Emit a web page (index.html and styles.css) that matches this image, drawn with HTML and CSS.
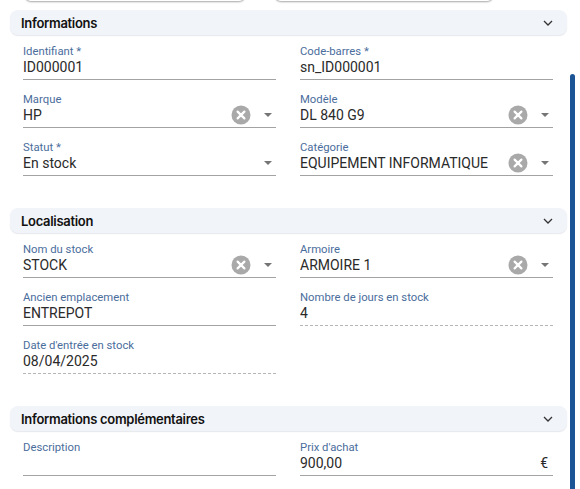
FILE: index.html
```html
<!DOCTYPE html>
<html lang="fr">
<head>
    <meta charset="UTF-8">
    <meta name="viewport" content="width=device-width, initial-scale=1.0">
    <title>Fiche équipement</title>
    <link rel="stylesheet" href="styles.css">
</head>
<body>
    <div class="top-actions">
        <div class="ghost-btn left"></div>
        <div class="ghost-btn right"></div>
    </div>

    <!-- Informations -->
    <section class="panel">
        <div class="panel-header">
            <h2>Informations</h2>
            <svg class="chevron" viewBox="0 0 10 6"><path d="M1 1 L5 5 L9 1"/></svg>
        </div>
        <div class="panel-body">
            <div class="field">
                <label>Identifiant *</label>
                <div class="control"><span class="value">ID000001</span></div>
            </div>
            <div class="field">
                <label>Code-barres *</label>
                <div class="control"><span class="value">sn_ID000001</span></div>
            </div>
            <div class="field">
                <label>Marque</label>
                <div class="control">
                    <span class="value">HP</span>
                    <svg class="clear" viewBox="0 0 20 20"><circle cx="10" cy="10" r="9.5"/><path d="M6.6 6.6 L13.4 13.4 M13.4 6.6 L6.6 13.4"/></svg>
                    <svg class="caret" viewBox="0 0 16 8"><path d="M4 2 L12 2 L8 6 Z"/></svg>
                </div>
            </div>
            <div class="field">
                <label>Modèle</label>
                <div class="control">
                    <span class="value">DL 840 G9</span>
                    <svg class="clear" viewBox="0 0 20 20"><circle cx="10" cy="10" r="9.5"/><path d="M6.6 6.6 L13.4 13.4 M13.4 6.6 L6.6 13.4"/></svg>
                    <svg class="caret" viewBox="0 0 16 8"><path d="M4 2 L12 2 L8 6 Z"/></svg>
                </div>
            </div>
            <div class="field">
                <label>Statut *</label>
                <div class="control">
                    <span class="value">En stock</span>
                    <svg class="caret" viewBox="0 0 16 8"><path d="M4 2 L12 2 L8 6 Z"/></svg>
                </div>
            </div>
            <div class="field">
                <label>Catégorie</label>
                <div class="control">
                    <span class="value">EQUIPEMENT INFORMATIQUE</span>
                    <svg class="clear" viewBox="0 0 20 20"><circle cx="10" cy="10" r="9.5"/><path d="M6.6 6.6 L13.4 13.4 M13.4 6.6 L6.6 13.4"/></svg>
                    <svg class="caret" viewBox="0 0 16 8"><path d="M4 2 L12 2 L8 6 Z"/></svg>
                </div>
            </div>
        </div>
    </section>

    <!-- Localisation -->
    <section class="panel">
        <div class="panel-header">
            <h2>Localisation</h2>
            <svg class="chevron" viewBox="0 0 10 6"><path d="M1 1 L5 5 L9 1"/></svg>
        </div>
        <div class="panel-body">
            <div class="field">
                <label>Nom du stock</label>
                <div class="control">
                    <span class="value">STOCK</span>
                    <svg class="clear" viewBox="0 0 20 20"><circle cx="10" cy="10" r="9.5"/><path d="M6.6 6.6 L13.4 13.4 M13.4 6.6 L6.6 13.4"/></svg>
                    <svg class="caret" viewBox="0 0 16 8"><path d="M4 2 L12 2 L8 6 Z"/></svg>
                </div>
            </div>
            <div class="field">
                <label>Armoire</label>
                <div class="control">
                    <span class="value">ARMOIRE 1</span>
                    <svg class="clear" viewBox="0 0 20 20"><circle cx="10" cy="10" r="9.5"/><path d="M6.6 6.6 L13.4 13.4 M13.4 6.6 L6.6 13.4"/></svg>
                    <svg class="caret" viewBox="0 0 16 8"><path d="M4 2 L12 2 L8 6 Z"/></svg>
                </div>
            </div>
            <div class="field">
                <label>Ancien emplacement</label>
                <div class="control"><span class="value">ENTREPOT</span></div>
            </div>
            <div class="field readonly">
                <label>Nombre de jours en stock</label>
                <div class="control"><span class="value">4</span></div>
            </div>
            <div class="field readonly">
                <label>Date d'entrée en stock</label>
                <div class="control"><span class="value">08/04/2025</span></div>
            </div>
        </div>
    </section>

    <!-- Informations complémentaires -->
    <section class="panel">
        <div class="panel-header">
            <h2>Informations complémentaires</h2>
            <svg class="chevron" viewBox="0 0 10 6"><path d="M1 1 L5 5 L9 1"/></svg>
        </div>
        <div class="panel-body">
            <div class="field">
                <label>Description</label>
                <div class="control"><span class="value"></span></div>
            </div>
            <div class="field">
                <label>Prix d'achat</label>
                <div class="control">
                    <span class="value">900,00</span>
                    <span class="suffix">€</span>
                </div>
            </div>
        </div>
    </section>

    <div class="scroll-thumb"></div>
</body>
</html>
```

FILE: styles.css
```css
* {
    margin: 0;
    padding: 0;
    box-sizing: border-box;
}

body {
    font-family: Roboto, "Liberation Sans", sans-serif;
    background: #fff;
    color: #222;
    overflow: hidden;
}

/* Buttons cut off at the top */
.top-actions {
    display: flex;
    gap: 30px;
    padding-left: 25px;
    height: 1px;
}

.ghost-btn {
    height: 30px;
    margin-top: -29px;
    background: #fff;
    border-radius: 0 0 6px 6px;
    box-shadow: 0 1px 2px rgba(0, 0, 0, 0.35);
}

.ghost-btn.left {
    width: 220px;
}

.ghost-btn.right {
    width: 218px;
}

/* Panels */
.panel {
    margin: 9px 13px 0 10px;
}

.panel + .panel {
    margin-top: 32px;
}

.panel-header {
    height: 25px;
    display: flex;
    align-items: center;
    justify-content: space-between;
    padding: 0 14px 0 11px;
    background: #f1f4f9;
    border-radius: 8px;
    box-shadow: 0 1px 1px rgba(40, 60, 90, 0.12);
}

.panel-header h2 {
    font-family: Inter, Roboto, sans-serif;
    font-size: 13px;
    font-weight: 600;
    letter-spacing: -0.3px;
    color: #111;
}

.chevron {
    width: 10px;
    height: 6px;
    fill: none;
    stroke: #333;
    stroke-width: 1.3;
}

.panel-body {
    display: grid;
    grid-template-columns: 1fr 1fr;
    column-gap: 24px;
    row-gap: 14px;
    padding: 11px 14px 0 13px;
}

/* Fields */
.field {
    display: flex;
    flex-direction: column;
    border-bottom: 1px solid #a3a3a3;
    padding-bottom: 3px;
}

.field.readonly {
    border-bottom: 1px dashed #b5b5b5;
}

.field label {
    font-size: 11.3px;
    line-height: 12px;
    color: #4a6d9c;
}

.control {
    display: flex;
    align-items: center;
    height: 18px;
}

.value {
    flex: 1;
    font-size: 14px;
    line-height: 18px;
    color: #2a2a2a;
    white-space: nowrap;
}

.clear {
    width: 20px;
    height: 20px;
    margin-right: 9px;
}

.clear circle {
    fill: #a9a9a9;
}

.clear path {
    stroke: #fff;
    stroke-width: 2.2;
    stroke-linecap: round;
}

.caret {
    width: 16px;
    height: 8px;
    fill: #757575;
}

.suffix {
    font-size: 14px;
    color: #2a2a2a;
    padding-right: 5px;
}

/* Scrollbar */
.scroll-thumb {
    position: fixed;
    right: 5px;
    top: 74px;
    bottom: 0;
    width: 5px;
    background: #1b5595;
    border-radius: 3px 3px 0 0;
}
```
